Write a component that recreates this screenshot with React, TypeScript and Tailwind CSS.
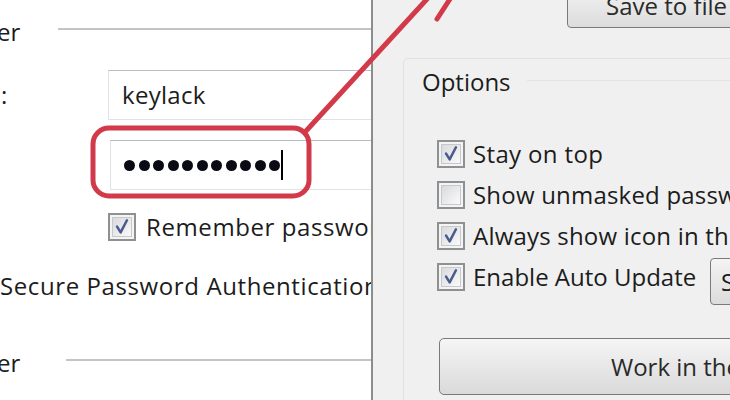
import React from "react";

const font = { fontFamily: '"Open Sans", "Noto Sans", sans-serif' };

function Check({ checked }: { checked: boolean }) {
  return (
    <div className="w-[28px] h-[28px] shrink-0 border-2 border-[#8f9091] bg-[#f4f4f4] p-[2px]">
      <div className="relative w-full h-full border border-[#c6c8cb] bg-linear-to-br from-[#d9dadc] to-[#fafafa]">
        {checked && (
          <svg viewBox="0 0 20 20" className="absolute inset-0 w-full h-full">
            <path d="M4.5 9.5 L8.5 16 L15.5 2.5" fill="none" stroke="#4a5b90" strokeWidth="2.8" strokeLinejoin="round" strokeLinecap="round" />
          </svg>
        )}
      </div>
    </div>
  );
}

function Dots() {
  return (
    <div className="flex items-center gap-[3.5px] shrink-0">
      {Array.from({ length: 11 }).map((_, i) => (
        <div key={i} className="w-[11px] h-[11px] rounded-full bg-[#0a0a14]" />
      ))}
    </div>
  );
}

export default function App() {
  return (
    <div
      className="relative w-[730px] h-[400px] overflow-hidden flex text-[24px] leading-[30px] text-[#1c1c1c] whitespace-nowrap"
      style={font}
    >
      {/* Left pane */}
      <div className="w-[371px] shrink-0 bg-white overflow-hidden flex flex-col">
        <div className="mt-[17px] h-[30px] flex items-center">
          <span className="-ml-[3px] shrink-0">er</span>
          <div className="ml-[38px] w-[320px] shrink-0 h-[2px] bg-[#c4c4c4] -mt-[6px]" />
        </div>
        <div className="mt-[23px] h-[50px] flex items-center">
          <span className="w-[108px] shrink-0 pl-[1px]">:</span>
          <div className="h-[50px] w-[300px] shrink-0 border border-[#dfe3e8] border-t-[#b9bcc2] bg-white pl-[13px] flex items-center tracking-[0.3px]">
            keylack
          </div>
        </div>
        <div className="mt-[20px] ml-[110px] h-[50px] w-[300px] shrink-0 border border-[#dfe3e8] border-t-[#b9bcc2] bg-white pl-[13px] flex items-center">
          <Dots />
          <div className="ml-[1px] w-[2px] h-[30px] shrink-0 bg-black" />
        </div>
        <div className="mt-[23px] ml-[108px] h-[28px] flex items-center gap-[10px]">
          <Check checked />
          <span className="shrink-0 tracking-[0.6px]">Remember password</span>
        </div>
        <div className="mt-[30px] h-[30px] tracking-[0.6px]">Secure Password Authentication</div>
        <div className="mt-[47px] h-[30px] flex items-center">
          <span className="-ml-[3px] shrink-0">er</span>
          <div className="ml-[46px] w-[320px] shrink-0 h-[2px] bg-[#c4c4c4] -mt-[6px]" />
        </div>
      </div>

      {/* Right pane */}
      <div className="flex-1 bg-[#f0f0f0] border-l-2 border-[#8c8c8c] overflow-hidden flex flex-col">
        <div className="-mt-[16px] ml-[194px] h-[44px] w-[200px] shrink-0 rounded-[4px] border border-[#7a7a7a] bg-linear-to-b from-[#f4f4f4] to-[#dcdcdc] pl-[38px] flex items-center text-[#2a2a2a]">
          Save to file
        </div>
        <div className="mt-[30px] ml-[30px] flex-1 rounded-tl-[5px] border-t border-l border-[#e0e0e0] flex flex-col">
          <div className="mt-[8px] h-[30px] flex items-center pl-[18px]">
            <span className="shrink-0">Options</span>
            <div className="ml-[16px] w-[300px] shrink-0 h-px bg-[#e4e4e4] -mt-[4px]" />
          </div>
          <div className="mt-[43px] ml-[33px] flex flex-col gap-[13px]">
            <div className="h-[28px] flex items-center gap-[8px]">
              <Check checked />
              <span className="shrink-0 tracking-[0.35px]">Stay on top</span>
            </div>
            <div className="h-[28px] flex items-center gap-[8px]">
              <Check checked={false} />
              <span className="shrink-0 tracking-[0.2px]">Show unmasked password</span>
            </div>
            <div className="h-[28px] flex items-center gap-[8px]">
              <Check checked />
              <span className="shrink-0 tracking-[0.2px]">Always show icon in the tray</span>
            </div>
            <div className="h-[28px] flex items-center gap-[8px]">
              <Check checked />
              <span className="w-[229px] shrink-0">Enable Auto Update</span>
              <div className="mt-[9px] h-[47px] w-[80px] shrink-0 rounded-[4px] border border-[#7a7a7a] bg-linear-to-b from-[#f4f4f4] to-[#dcdcdc] pl-[10px] flex items-center">
                Settings
              </div>
            </div>
          </div>
          <div className="mt-[47px] ml-[35px] h-[57px] w-[400px] shrink-0 rounded-[5px] border border-[#7a7a7a] bg-linear-to-b from-[#f5f5f5] to-[#dadada] pl-[171px] flex items-center text-[#2a2a2a]">
            Work in the background
          </div>
        </div>
      </div>

      {/* Red annotation */}
      <svg className="absolute inset-0 pointer-events-none" width="730" height="400" viewBox="0 0 730 400">
        <rect x="93" y="128" width="216" height="68" rx="16" fill="none" stroke="#d23a4a" strokeWidth="5" />
        <path d="M306 131 L428 -2" fill="none" stroke="#d23a4a" strokeWidth="5" strokeLinecap="round" />
        <path d="M437 19 L450 -1" fill="none" stroke="#d23a4a" strokeWidth="5" strokeLinecap="round" />
      </svg>
    </div>
  );
}
